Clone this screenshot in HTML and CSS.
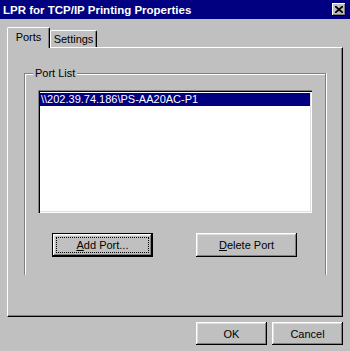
FILE: index.html
```html
<!DOCTYPE html>
<html lang="en">
<head>
    <meta charset="UTF-8">
    <title>LPR for TCP/IP Printing Properties</title>
    <link rel="stylesheet" href="styles.css">
</head>
<body>
    <div class="window">
        <div class="titlebar">
            <span class="title">LPR for TCP/IP Printing Properties</span>
            <span class="close">
                <svg width="8" height="7" viewBox="0 0 8 7">
                    <path d="M0 0 L8 7 M8 0 L0 7" stroke="#000" stroke-width="1.8"/>
                </svg>
            </span>
        </div>

        <div class="tabs">
            <div class="tab active">Ports</div>
            <div class="tab tab-settings">Settings</div>
        </div>

        <div class="panel">
            <div class="group">
                <div class="group-label">Port List</div>
                <div class="listbox">
                    <div class="item selected">\\202.39.74.186\PS-AA20AC-P1</div>
                </div>
                <div class="group-buttons">
                    <button class="btn btn-wide default"><span class="focus"><u>A</u>dd Port...</span></button>
                    <button class="btn btn-wide"><span class="label"><u>D</u>elete Port</span></button>
                </div>
            </div>
        </div>

        <div class="footer">
            <button class="btn btn-small"><span class="label">OK</span></button>
            <button class="btn btn-small"><span class="label">Cancel</span></button>
        </div>
    </div>
</body>
</html>
```

FILE: styles.css
```css
body {
    margin: 0;
    font-family: "Liberation Sans", Arial, sans-serif;
    font-size: 11px;
    color: #000;
}
.window {
    width: 350px;
    height: 351px;
    background: #c0c0c0;
    overflow: hidden;
}
.titlebar {
    height: 19px;
    background: #000080;
    color: #fff;
    font-weight: bold;
    font-size: 11.5px;
    display: flex;
    align-items: center;
    justify-content: space-between;
    padding: 0 4px 0 3px;
}
.close {
    width: 14px;
    height: 13px;
    background: #c0c0c0;
    display: flex;
    align-items: center;
    justify-content: center;
    box-shadow: inset -1px -1px #000, inset 1px 1px #fff, inset -2px -2px #808080;
}
.tabs {
    display: flex;
    align-items: flex-end;
    height: 20px;
    padding: 8px 0 0 7px;
    position: relative;
    z-index: 1;
}
.tab {
    height: 17px;
    width: 47px;
    box-sizing: border-box;
    border: 1px solid #fff;
    border-right: 1px solid #000;
    border-bottom: none;
    border-radius: 2px 2px 0 0;
    box-shadow: inset -1px 0 #808080;
    display: flex;
    align-items: center;
    justify-content: center;
    background: #c0c0c0;
}
.tab.active {
    width: 43px;
    height: 21px;
    margin-bottom: -1px;
    padding-bottom: 2px;
}
.panel {
    margin: 0 7px;
    height: 270px;
    box-sizing: border-box;
    border: 1px solid #fff;
    border-right-color: #000;
    border-bottom-color: #000;
    box-shadow: inset -1px -1px #808080;
    padding: 25px 16px 0 16px;
}
.group {
    height: 202px;
    box-sizing: border-box;
    border: 1px solid #808080;
    border-bottom: none;
    box-shadow: inset 1px 1px #fff, 1px 0 #fff;
    padding: 0 13px;
}
.group-label {
    width: fit-content;
    margin: -7px 0 0 -5px;
    padding: 0 2px;
    line-height: 13px;
    background: #c0c0c0;
}
.listbox {
    margin-top: 10px;
    height: 123px;
    box-sizing: border-box;
    background: #fff;
    padding: 3px 2px 0 2px;
    box-shadow: inset 1px 1px #808080, inset 2px 2px #000, inset -1px -1px #fff, inset -2px -2px #dfdfdf;
}
.item {
    height: 13px;
    line-height: 13px;
    padding-left: 1px;
}
.item.selected {
    background: #000080;
    color: #fff;
}
.group-buttons {
    display: flex;
    gap: 43px;
    margin-top: 20px;
    padding-left: 14px;
}
.btn {
    font: inherit;
    background: #c0c0c0;
    border: none;
    padding: 0;
    display: flex;
    box-shadow: inset -1px -1px #000, inset 1px 1px #fff, inset -2px -2px #808080, inset 2px 2px #dfdfdf;
}
.btn-wide {
    width: 101px;
    height: 24px;
}
.btn.default {
    border: 1px solid #000;
}
.btn .label,
.btn .focus {
    flex: 1;
    display: flex;
    align-items: center;
    justify-content: center;
}
.btn .focus {
    margin: 3px;
    border: 1px dotted #000;
}
.footer {
    display: flex;
    justify-content: flex-end;
    gap: 5px;
    padding: 5px 7px 0 0;
}
.btn-small {
    width: 71px;
    height: 23px;
}
```
